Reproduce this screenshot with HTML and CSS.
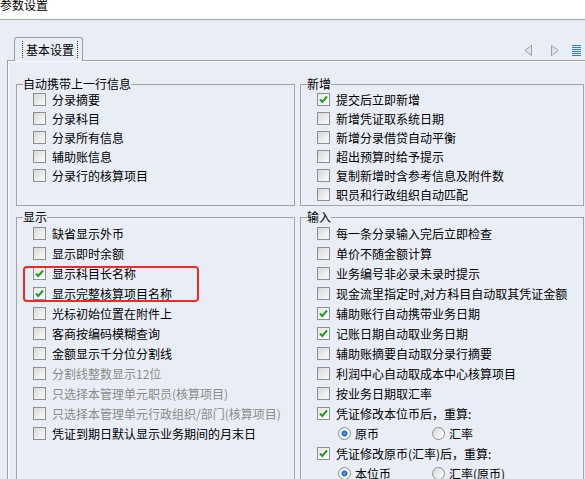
FILE: index.html
```html
<!DOCTYPE html>
<html lang="zh-CN">
<head>
    <meta charset="UTF-8">
    <meta name="viewport" content="width=device-width, initial-scale=1.0">
    <title>参数设置</title>
    <link rel="stylesheet" href="styles.css">
</head>
<body>
    <div class="titlebar"><span class="title">参数设置</span></div>

    <div class="tabstrip">
        <div class="tab"><span class="tab-label">基本设置</span></div>
        <div class="tab-tools">
            <svg class="tool-prev" width="8" height="11" viewBox="0 0 8 11"><path d="M7.5 0.5 L0.8 5.5 L7.5 10.5 Z" fill="#dfe4ec" stroke="#9aa1aa" stroke-width="1"/></svg>
            <svg class="tool-next" width="8" height="11" viewBox="0 0 8 11"><path d="M0.5 0.5 L7.2 5.5 L0.5 10.5 Z" fill="#dfe4ec" stroke="#9aa1aa" stroke-width="1"/></svg>
            <svg class="tool-list" width="9" height="11" viewBox="0 0 9 11">
                <rect x="0" y="0" width="9" height="1" fill="#2f7fd0"/>
                <rect x="0" y="2" width="9" height="1" fill="#2f7fd0"/>
                <rect x="0" y="4" width="9" height="1" fill="#2f7fd0"/>
                <rect x="0" y="6" width="9" height="1" fill="#2f7fd0"/>
                <rect x="0" y="8" width="9" height="1" fill="#2f7fd0"/>
                <rect x="0" y="10" width="9" height="1" fill="#2f7fd0"/>
            </svg>
        </div>
    </div>

    <div class="panel">
        <div class="groups">
            <!-- 自动携带上一行信息 -->
            <fieldset class="group">
                <legend>自动携带上一行信息</legend>
                <div class="opt"><span class="cb"></span><span>分录摘要</span></div>
                <div class="opt"><span class="cb"></span><span>分录科目</span></div>
                <div class="opt"><span class="cb"></span><span>分录所有信息</span></div>
                <div class="opt"><span class="cb"></span><span>辅助账信息</span></div>
                <div class="opt"><span class="cb"></span><span>分录行的核算项目</span></div>
            </fieldset>

            <!-- 新增 -->
            <fieldset class="group">
                <legend>新增</legend>
                <div class="opt"><span class="cb on"><svg viewBox="0 0 11 11"><path d="M2 5.5 L4.3 8 L9 2.5"/></svg></span><span>提交后立即新增</span></div>
                <div class="opt"><span class="cb"></span><span>新增凭证取系统日期</span></div>
                <div class="opt"><span class="cb"></span><span>新增分录借贷自动平衡</span></div>
                <div class="opt"><span class="cb"></span><span>超出预算时给予提示</span></div>
                <div class="opt"><span class="cb"></span><span>复制新增时含参考信息及附件数</span></div>
                <div class="opt"><span class="cb"></span><span>职员和行政组织自动匹配</span></div>
            </fieldset>

            <!-- 显示 -->
            <fieldset class="group tall">
                <legend>显示</legend>
                <div class="opt"><span class="cb"></span><span>缺省显示外币</span></div>
                <div class="opt"><span class="cb"></span><span>显示即时余额</span></div>
                <div class="marked">
                    <div class="opt"><span class="cb on"><svg viewBox="0 0 11 11"><path d="M2 5.5 L4.3 8 L9 2.5"/></svg></span><span>显示科目长名称</span></div>
                    <div class="opt"><span class="cb on"><svg viewBox="0 0 11 11"><path d="M2 5.5 L4.3 8 L9 2.5"/></svg></span><span>显示完整核算项目名称</span></div>
                </div>
                <div class="opt"><span class="cb"></span><span>光标初始位置在附件上</span></div>
                <div class="opt"><span class="cb"></span><span>客商按编码模糊查询</span></div>
                <div class="opt"><span class="cb"></span><span>金额显示千分位分割线</span></div>
                <div class="opt disabled"><span class="cb"></span><span>分割线整数显示12位</span></div>
                <div class="opt disabled"><span class="cb"></span><span>只选择本管理单元职员(核算项目)</span></div>
                <div class="opt disabled"><span class="cb"></span><span>只选择本管理单元行政组织/部门(核算项目)</span></div>
                <div class="opt"><span class="cb"></span><span>凭证到期日默认显示业务期间的月末日</span></div>
            </fieldset>

            <!-- 输入 -->
            <fieldset class="group tall">
                <legend>输入</legend>
                <div class="opt"><span class="cb"></span><span>每一条分录输入完后立即检查</span></div>
                <div class="opt"><span class="cb"></span><span>单价不随金额计算</span></div>
                <div class="opt"><span class="cb"></span><span>业务编号非必录未录时提示</span></div>
                <div class="opt"><span class="cb"></span><span>现金流里指定时,对方科目自动取其凭证金额</span></div>
                <div class="opt"><span class="cb on"><svg viewBox="0 0 11 11"><path d="M2 5.5 L4.3 8 L9 2.5"/></svg></span><span>辅助账行自动携带业务日期</span></div>
                <div class="opt"><span class="cb on"><svg viewBox="0 0 11 11"><path d="M2 5.5 L4.3 8 L9 2.5"/></svg></span><span>记账日期自动取业务日期</span></div>
                <div class="opt"><span class="cb"></span><span>辅助账摘要自动取分录行摘要</span></div>
                <div class="opt"><span class="cb"></span><span>利润中心自动取成本中心核算项目</span></div>
                <div class="opt"><span class="cb"></span><span>按业务日期取汇率</span></div>
                <div class="opt"><span class="cb on"><svg viewBox="0 0 11 11"><path d="M2 5.5 L4.3 8 L9 2.5"/></svg></span><span>凭证修改本位币后，重算:</span></div>
                <div class="radios">
                    <div class="radio"><span class="rd on"></span><span>原币</span></div>
                    <div class="radio"><span class="rd"></span><span>汇率</span></div>
                </div>
                <div class="opt"><span class="cb on"><svg viewBox="0 0 11 11"><path d="M2 5.5 L4.3 8 L9 2.5"/></svg></span><span>凭证修改原币(汇率)后，重算:</span></div>
                <div class="radios">
                    <div class="radio"><span class="rd on"></span><span>本位币</span></div>
                    <div class="radio"><span class="rd"></span><span>汇率(原币)</span></div>
                </div>
            </fieldset>
        </div>
    </div>
</body>
</html>
```

FILE: styles.css
```css
body {
    margin: 0;
    background-color: #e9edf5;
    font-family: "Noto Sans CJK SC", "Liberation Sans", sans-serif;
    font-size: 12px;
    color: #000;
    overflow: hidden;
}

.titlebar {
    height: 19px;
    background-color: #fff;
    border-bottom: 1px solid #a3a3a3;
    overflow: hidden;
}

.title {
    display: block;
    margin-top: -2px;
    font-size: 12px;
    line-height: 14px;
}

/* tab strip */
.tabstrip {
    display: flex;
    padding: 17px 4px 0 14px;
}

.tab {
    position: relative;
    z-index: 1;
    box-sizing: border-box;
    height: 24px;
    margin-bottom: -1px;
    padding: 3px 4px 0 7px;
    border: 1px solid #9c9c9c;
    border-bottom: none;
    border-radius: 3px 3px 0 0;
    background-color: #e9edf5;
}

.tab-label {
    display: block;
    padding: 0 3px;
    line-height: 17px;
    border-left: 1px dotted #333;
    border-right: 1px dotted #333;
}

.tab-tools {
    display: flex;
    align-items: center;
    align-self: flex-end;
    margin-left: auto;
    margin-bottom: 4px;
}

.tool-next {
    margin-left: 19px;
}

.tool-list {
    margin-left: 13px;
}

/* panel */
.panel {
    margin-left: 7px;
    padding: 17px 0 0 8px;
    min-height: 500px;
    border-top: 1px solid #a0a0a0;
    border-left: 1px solid #a0a0a0;
    box-shadow: inset 1px 1px 0 #fbfcfe;
}

.groups {
    display: grid;
    grid-template-columns: 279px 284px;
    column-gap: 5px;
    row-gap: 5px;
}

.group {
    margin: 0;
    padding: 0 6px 1px;
    min-width: 0;
    border: 1px solid #a3a3a3;
}

.group legend {
    padding: 0;
    line-height: 12px;
}

.opt {
    display: flex;
    align-items: center;
    height: 19px;
    padding-left: 10px;
    white-space: nowrap;
}

.tall .opt {
    height: 20px;
}

.opt.disabled {
    color: #8b8b8b;
}

.cb {
    box-sizing: border-box;
    flex: none;
    width: 13px;
    height: 13px;
    margin-right: 6px;
    border: 1px solid #8e8f8f;
    background: linear-gradient(135deg, #d6d7d9 0%, #eeeeee 60%, #fbfbfb 100%);
}

.cb.on {
    background: linear-gradient(135deg, #e4e5e7 0%, #f7f7f7 70%, #fff 100%);
}

.cb svg {
    display: block;
    width: 11px;
    height: 11px;
}

.cb svg path {
    fill: none;
    stroke: #1f9e22;
    stroke-width: 2;
}

/* red annotation around the two long-name rows */
.marked {
    position: relative;
}

.marked::after {
    content: "";
    position: absolute;
    top: 3px;
    left: 0;
    width: 176px;
    height: 36px;
    box-sizing: border-box;
    border: 2px solid #ee2a22;
    border-radius: 4px;
}

.radios {
    display: flex;
    height: 20px;
    padding-left: 31px;
}

.radio {
    display: flex;
    align-items: center;
    width: 94px;
}

.rd {
    box-sizing: border-box;
    flex: none;
    width: 13px;
    height: 13px;
    margin-right: 4px;
    border: 1px solid #8e8f8f;
    border-radius: 50%;
    background: linear-gradient(135deg, #d6d7d9 0%, #f0f0f0 60%, #fff 100%);
}

.rd.on {
    background: radial-gradient(circle, #5aa9ec 0, #1c66c6 2.5px, #ffffff 3.5px, #f4f4f4 5px, #d9dadc 6px);
}
```
